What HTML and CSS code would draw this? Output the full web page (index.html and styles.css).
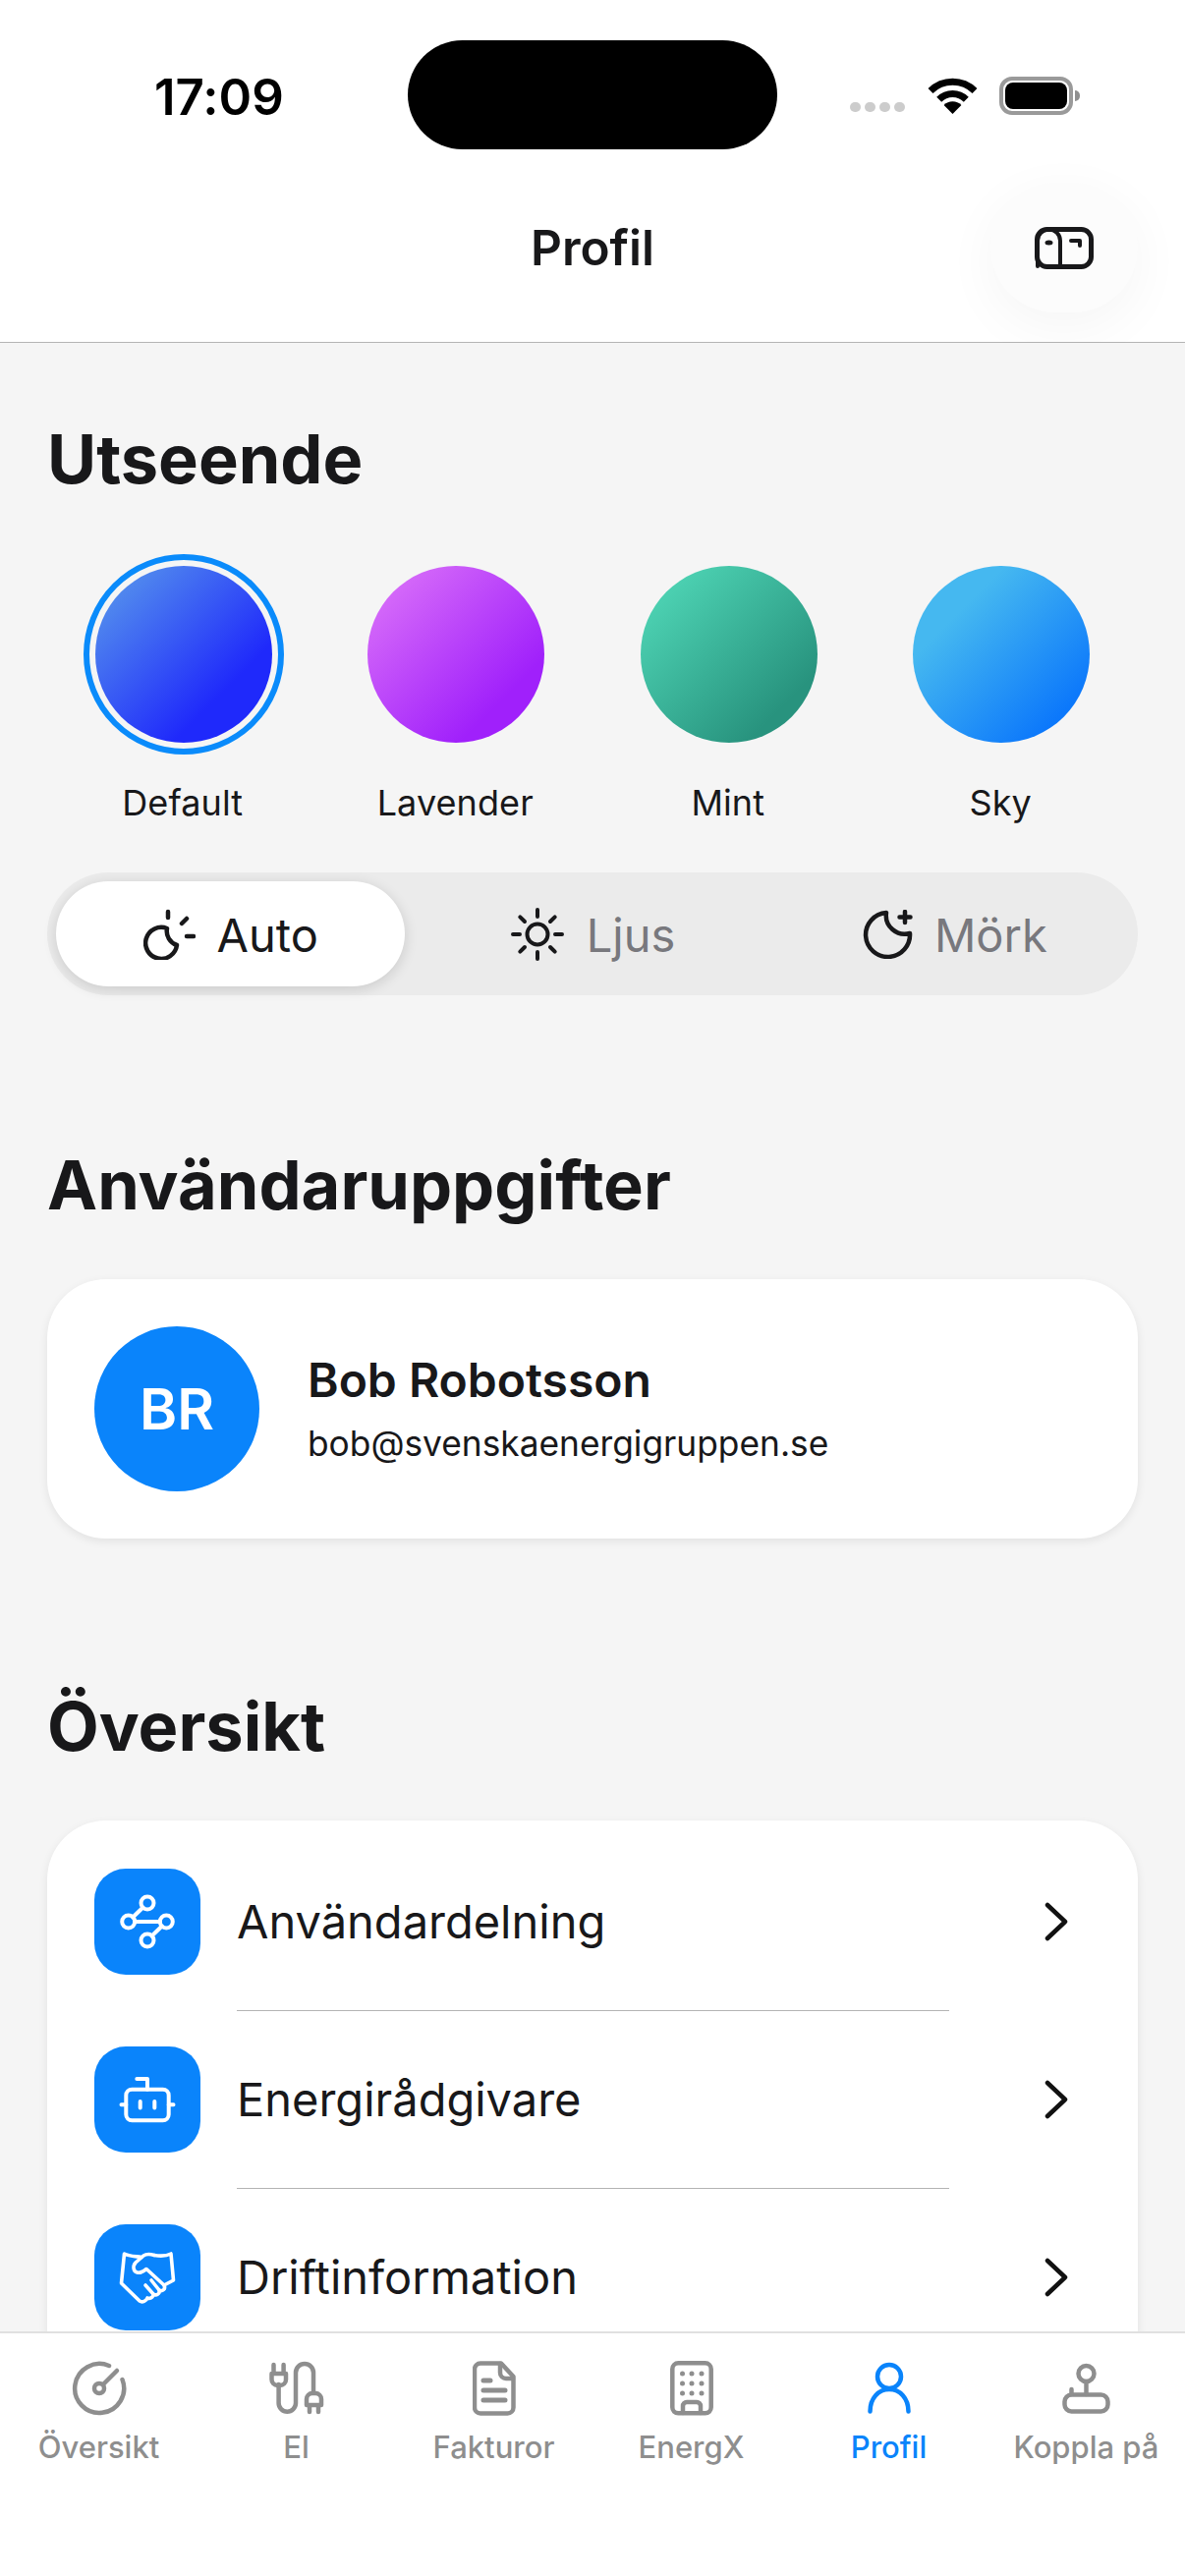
FILE: index.html
```html
<!DOCTYPE html>
<html lang="sv">
<head>
  <meta charset="UTF-8">
  <title>Profil</title>
  <link rel="stylesheet" href="styles.css">
</head>
<body>
<div class="app">
  <header class="topbar">
    <div class="status">
      <span class="clock">17:09</span>
      <span class="island"></span>
      <div class="status-icons">
        <span class="signal"><i></i><i></i><i></i><i></i></span>
        <svg class="wifi" width="51" height="37" viewBox="0 0 51 37">
          <path d="M3 13.4A32 32 0 0 1 48 13.4M11.7 22.2A19.5 19.5 0 0 1 39.3 22.2" fill="none" stroke="#000" stroke-width="7"/>
          <path d="M25.5 37L16.6 28A12.6 12.6 0 0 1 34.4 28Z" fill="#000"/>
        </svg>
        <span class="battery"><span class="battery-fill"></span></span>
      </div>
    </div>
    <div class="navrow">
      <span></span>
      <h1 class="page-title">Profil</h1>
      <button class="round-btn">
        <svg width="60" height="43" viewBox="0 0 60 43" fill="none" stroke="#18181a" stroke-width="5" stroke-linecap="round" stroke-linejoin="round">
          <rect x="2.5" y="2.5" width="55" height="38" rx="10"/>
          <path d="M3 40V14A11.5 11.5 0 0 1 26 14V40" stroke-width="4"/>
          <path d="M37 14H46V19" stroke-width="4"/>
          <ellipse cx="14.500" cy="16" rx="3" ry="1.500" stroke-width="2" fill="#18181a"/>
        </svg>
      </button>
    </div>
  </header>

  <main class="content">
    <h2 class="section-title first">Utseende</h2>
    <div class="swatches">
      <div class="swatch"><span class="dot dot-default selected"></span><span class="swatch-name">Default</span></div>
      <div class="swatch"><span class="dot dot-lavender"></span><span class="swatch-name">Lavender</span></div>
      <div class="swatch"><span class="dot dot-mint"></span><span class="swatch-name">Mint</span></div>
      <div class="swatch"><span class="dot dot-sky"></span><span class="swatch-name">Sky</span></div>
    </div>

    <div class="segments">
      <div class="segment active">
        <svg width="53" height="52" viewBox="0 0 53 52" fill="none" stroke="#18181a" stroke-width="4.500" stroke-linecap="round" stroke-linejoin="round">
          <path d="M24 20A16 16 0 1 0 34 37A15 15 0 0 1 24 20Z"/>
          <path d="M25 3V9M44 10L39 15M44 28H51"/>
        </svg>
        <span>Auto</span>
      </div>
      <div class="segment">
        <svg width="56" height="56" viewBox="0 0 56 56" fill="none" stroke="#18181a" stroke-width="4" stroke-linecap="round">
          <circle cx="28" cy="28" r="10.500"/>
          <path d="M28 3V10M28 46V53M3 28H10M46 28H53M10.300 10.300L15 15M41 41L45.700 45.700M10.300 45.700L15 41M41 15L45.700 10.300"/>
        </svg>
        <span>Ljus</span>
      </div>
      <div class="segment">
        <svg width="52" height="50" viewBox="0 0 52 50" fill="none" stroke="#18181a" stroke-width="4.500" stroke-linecap="round" stroke-linejoin="round">
          <path d="M25 3A22.500 22.500 0 1 0 49 24A19 19 0 0 1 25 3Z"/>
          <path d="M44 2V13M38.500 7.500H49.500"/>
        </svg>
        <span>Mörk</span>
      </div>
    </div>

    <h2 class="section-title second">Användaruppgifter</h2>
    <section class="card user-card">
      <div class="avatar">BR</div>
      <div>
        <div class="user-name">Bob Robotsson</div>
        <div class="user-mail">bob@svenskaenergigruppen.se</div>
      </div>
    </section>

    <h2 class="section-title">Översikt</h2>
    <section class="card menu-card">
      <div class="menu-row">
        <span class="menu-icon">
          <svg width="60" height="60" viewBox="0 0 60 60" fill="none" stroke="#fff" stroke-width="4" stroke-linecap="round">
            <circle cx="30" cy="11" r="6.500"/><circle cx="10.700" cy="30" r="6.500"/><circle cx="49.300" cy="30" r="6.500"/><circle cx="30" cy="49" r="6.500"/>
            <path d="M17.200 30H42.800M25.500 15.500L15.200 25.500M44.800 34.500L34.500 44.500"/>
          </svg>
        </span>
        <span class="menu-label">Användardelning</span>
        <svg class="chevron" width="26" height="40" viewBox="0 0 26 40" fill="none" stroke="#111" stroke-width="4.500" stroke-linecap="round" stroke-linejoin="round"><path d="M4 3L22 20L4 37"/></svg>
      </div>
      <div class="menu-sep"></div>
      <div class="menu-row">
        <span class="menu-icon">
          <svg width="60" height="60" viewBox="0 0 60 60" fill="none" stroke="#fff" stroke-width="4" stroke-linecap="round" stroke-linejoin="round">
            <rect x="8.300" y="19.700" width="43.400" height="31.600" rx="6"/>
            <path d="M30 19.700V9H19.300M3.500 35.300H8.300M51.700 35.300H56.500M22.700 32V38.500M37.300 32V38.500"/>
          </svg>
        </span>
        <span class="menu-label">Energirådgivare</span>
        <svg class="chevron" width="26" height="40" viewBox="0 0 26 40" fill="none" stroke="#111" stroke-width="4.500" stroke-linecap="round" stroke-linejoin="round"><path d="M4 3L22 20L4 37"/></svg>
      </div>
      <div class="menu-sep"></div>
      <div class="menu-row">
        <span class="menu-icon">
          <svg width="60" height="60" viewBox="0 0 60 60" fill="none" stroke="#fff" stroke-width="3.600" stroke-linecap="round" stroke-linejoin="round">
            <path d="M37 7.500C32 6 29 6 26 8L18 15C14.500 19 16 24 19.500 25C23 26 26 24 29 21.500L47 38"/>
            <path d="M54 6C49 8.500 43 8.500 37 7.500M54 6L56.500 33L47 38C49 42 45 45 42 43C43 47 39 49 36 47C36 51 32 52 30 51C29 54 25 56 22 54L3.500 36L6.500 6C11 8.500 17 8.500 24 9.500"/>
            <path d="M34 33L42 43M28 38L36 47"/>
          </svg>
        </span>
        <span class="menu-label">Driftinformation</span>
        <svg class="chevron" width="26" height="40" viewBox="0 0 26 40" fill="none" stroke="#111" stroke-width="4.500" stroke-linecap="round" stroke-linejoin="round"><path d="M4 3L22 20L4 37"/></svg>
      </div>
    </section>
  </main>

  <nav class="tabbar">
    <div class="tab">
      <svg width="56" height="56" viewBox="0 0 56 56" fill="none" stroke="#8e8e8e" stroke-width="4.500" stroke-linecap="round">
        <path d="M38 5A25 25 0 1 0 51.500 19"/>
        <circle cx="28" cy="28" r="5"/>
        <path d="M32 24L46 10"/>
      </svg>
      <span>Översikt</span>
    </div>
    <div class="tab">
      <svg width="56" height="56" viewBox="0 0 56 56" fill="none" stroke="#8e8e8e" stroke-width="4.500" stroke-linecap="round" stroke-linejoin="round">
        <path d="M9.600 24V43A8.700 8.700 0 0 0 27 43V12A9 9 0 0 1 45 12V32"/>
        <path d="M2.500 13H17V19A6 6 0 0 1 11 25H8.500A6 6 0 0 1 2.500 19ZM4.500 4V12M14.600 4V12"/>
        <path d="M38 39A6 6 0 0 1 44 33H47A6 6 0 0 1 53 39V45H38ZM41 45V52M50 45V52"/>
      </svg>
      <span>El</span>
    </div>
    <div class="tab">
      <svg width="44" height="56" viewBox="0 0 44 56" fill="none" stroke="#8e8e8e" stroke-width="4.500" stroke-linecap="round" stroke-linejoin="round">
        <path d="M8 2.500H29L41.500 16V47.500A6 6 0 0 1 35.500 53.500H8A6 6 0 0 1 2 47.500V8.500A6 6 0 0 1 8 2.500Z"/>
        <path d="M28 3V12A6 6 0 0 0 34 18H41"/>
        <path d="M11 20H18M11 30H33M11 40H33" stroke-width="5"/>
      </svg>
      <span>Fakturor</span>
    </div>
    <div class="tab">
      <svg width="44" height="56" viewBox="0 0 44 56" fill="none" stroke="#8e8e8e" stroke-width="4.500" stroke-linecap="round" stroke-linejoin="round">
        <rect x="2.300" y="2.300" width="39.400" height="51" rx="6"/>
        <path d="M13 53V46A4 4 0 0 1 17 42H27A4 4 0 0 1 31 46V53"/>
        <g fill="#8e8e8e" stroke="none">
          <circle cx="12.500" cy="13" r="2.500"/><circle cx="22" cy="13" r="2.500"/><circle cx="32" cy="13" r="2.500"/>
          <circle cx="12.500" cy="23" r="2.500"/><circle cx="22" cy="23" r="2.500"/><circle cx="32" cy="23" r="2.500"/>
          <circle cx="12.500" cy="33" r="2.500"/><circle cx="22" cy="33" r="2.500"/><circle cx="32" cy="33" r="2.500"/>
        </g>
      </svg>
      <span>EnergX</span>
    </div>
    <div class="tab current">
      <svg width="44" height="56" viewBox="0 0 44 56" fill="none" stroke="#0a84fb" stroke-width="4.500" stroke-linecap="round">
        <circle cx="22" cy="16" r="12"/>
        <path d="M2.500 51.500C2.500 38 11 29 22 29S41.500 38 41.500 51.500"/>
      </svg>
      <span>Profil</span>
    </div>
    <div class="tab">
      <svg width="49" height="56" viewBox="0 0 49 56" fill="none" stroke="#8e8e8e" stroke-width="4.500" stroke-linecap="round" stroke-linejoin="round">
        <circle cx="24.500" cy="13" r="8"/>
        <rect x="2.500" y="34.500" width="44" height="17" rx="7"/>
        <path d="M24.500 21V34M9.500 29V34"/>
      </svg>
      <span>Koppla på</span>
    </div>
  </nav>
</div>
</body>
</html>
```
FILE: styles.css
```css
* { box-sizing: border-box; }
html, body { margin: 0; padding: 0; }
body { font-family: Inter, "Noto Sans", sans-serif; color: #18181a; background: #f5f5f5; font-variant-ligatures: none; }
svg { display: block; flex: none; }
h1, h2 { margin: 0; }

.app { width: 1206px; height: 2622px; display: flex; flex-direction: column; overflow: hidden; }

/* top bar */
.topbar { background: #fff; height: 349px; flex: none; border-bottom: 1px solid #b4b4b4; padding-top: 41px; }
.status { display: grid; grid-template-columns: 415px 376px 1fr; height: 111px; align-items: center; }
.clock { padding-left: 157px; font-size: 51px; font-weight: 600; color: #000; line-height: 1; margin-top: 4px; }
.island { height: 111px; border-radius: 56px; background: #000; }
.status-icons { display: flex; align-items: center; gap: 23px; padding-left: 74px; margin-top: 2px; }
.signal { display: flex; gap: 4px; margin-top: 23px; }
.signal i { width: 11px; height: 10px; border-radius: 5px; background: #ccc; }
.battery { position: relative; width: 75px; height: 39px; border: 4px solid #9a9a9a; border-radius: 13px; padding: 2px; margin-left: -1px; }
.battery::after { content: ""; position: absolute; left: 73px; top: 10px; width: 5px; height: 11px; border-radius: 0 5px 5px 0; background: #8f8f8f; }
.battery-fill { display: block; height: 100%; background: #000; border-radius: 8px; }

.navrow { display: grid; grid-template-columns: 150px 1fr 150px; align-items: center; padding: 0 48px; margin-top: 34px; }
.page-title { text-align: center; font-size: 49.5px; font-weight: 600; line-height: 60px; }
.round-btn { width: 150px; height: 132px; border: none; padding: 0; border-radius: 66px; background: #fcfcfc; display: flex; align-items: center; justify-content: center; box-shadow: 0 14px 55px rgba(0, 0, 0, .045); }

/* scrolling content */
.content { flex: 1; min-height: 0; overflow: hidden; padding: 0 48px; background: #f5f5f5; }
.section-title { font-size: 68.500px; font-weight: 700; line-height: 80px; margin-top: 152px; }
.section-title.first { margin-top: 79px; }
.section-title.second { margin-top: 154px; }

.swatches { display: grid; grid-template-columns: repeat(4, 1fr); margin-top: 68px; }
.swatch { display: flex; flex-direction: column; align-items: center; }
.dot { width: 180px; height: 180px; border-radius: 50%; }
.dot.selected { outline: 6px solid #0a8bfb; outline-offset: 6px; }
.dot-default { background: linear-gradient(135deg, #5088ee 14%, #1f29fb 72%); }
.dot-lavender { background: linear-gradient(135deg, #d468f9 14%, #a020fb 76%); }
.dot-mint { background: linear-gradient(135deg, #4bcfb0 16%, #28937e 80%); }
.dot-sky { background: linear-gradient(135deg, #45b8f0 26%, #0c78fb 84%); }
.swatch-name { font-size: 36px; line-height: 44px; margin-top: 39px; margin-left: -2px; letter-spacing: .1px; }

.segments { display: flex; gap: 13px; height: 125px; padding: 9px; margin-top: 49px; background: #ebebeb; border-radius: 63px; }
.segment { flex: 1; display: flex; align-items: center; justify-content: center; gap: 22px; font-size: 47px; color: #78787d; border-radius: 54px; }
.segment span { margin-top: 2px; }
.segment.active { background: #fff; color: #18181a; box-shadow: 0 3px 14px rgba(0, 0, 0, .14); }

.card { background: #fff; border-radius: 60px; box-shadow: 0 3px 10px rgba(0, 0, 0, .08); }
.section-title + .card { margin-top: 55px; }

.user-card { height: 264px; display: flex; align-items: center; gap: 50px; padding-left: 48px; }
.avatar { width: 168px; height: 168px; border-radius: 50%; background: #0a84fb; color: #fff; font-size: 58px; font-weight: 600; display: flex; align-items: center; justify-content: center; }
.user-name { font-size: 48px; font-weight: 600; line-height: 56px; margin-left: -1px; }
.user-mail { font-size: 35.300px; line-height: 44px; margin-top: 15px; margin-left: -1px; }

.menu-card { padding: 49px 48px 60px; border-radius: 60px; }
.menu-row { display: flex; align-items: center; gap: 37px; }
.menu-icon { width: 108px; height: 108px; border-radius: 32px; background: #0a84fb; display: flex; align-items: center; justify-content: center; flex: none; }
.menu-label { flex: 1; font-size: 47px; line-height: 60px; }
.chevron { margin-right: 22px; }
.menu-sep { height: 1px; background: #b4b4b4; margin: 36px 144px 36px 145px; }

/* bottom tabs */
.tabbar { flex: none; height: 249px; background: #fff; border-top: 2px solid #e0e0e0; display: grid; grid-template-columns: repeat(6, 1fr); padding-top: 28px; position: relative; }
.tab { display: flex; flex-direction: column; align-items: center; font-size: 31px; font-weight: 500; color: #8e8e8e; }
.tab span { line-height: 36px; margin-top: 14px; }
.tab.current { color: #0a84fb; }
```
